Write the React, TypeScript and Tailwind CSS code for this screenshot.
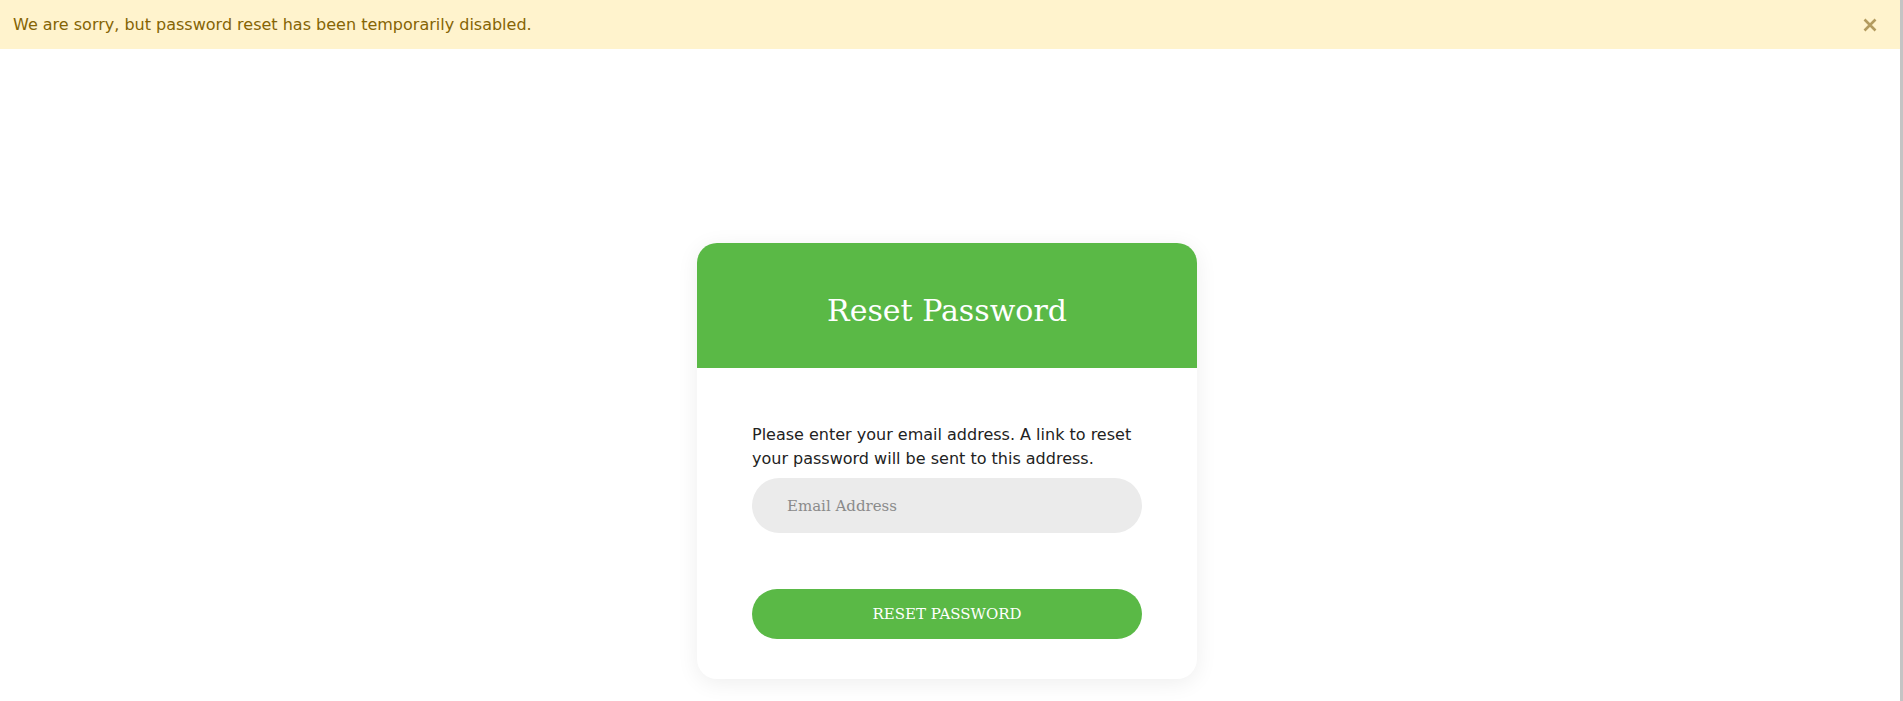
import React from "react";

export default function App() {
  return (
    <div className="flex min-h-[701px] w-full bg-white">
      <div className="flex-1 flex flex-col">
        <div className="h-[49px] bg-[#fff3cd] flex items-center justify-between pl-[13px] pr-[23px]" style={{ fontFamily: '"DejaVu Sans", sans-serif' }}>
          <span className="text-[16px] text-[#856404]">We are sorry, but password reset has been temporarily disabled.</span>
          <button className="w-[14px] h-[14px] flex items-center justify-center text-[#b39b5f]" aria-label="Close">
            <svg width="14" height="14" viewBox="0 0 14 14" fill="none" stroke="currentColor" strokeWidth="2.6" strokeLinecap="butt">
              <path d="M1.5 1.5 L12.5 12.5 M12.5 1.5 L1.5 12.5" />
            </svg>
          </button>
        </div>
        <div className="flex justify-center pt-[194px] pr-[6px]">
          <div className="w-[500px] rounded-[20px] bg-white shadow-[0_4px_22px_rgba(0,0,0,0.07)] overflow-hidden">
            <div className="h-[125px] bg-[#5ab946] pt-[50px]">
              <h1 className="text-center text-[30px] leading-[35px] text-white" style={{ fontFamily: '"DejaVu Serif", serif' }}>Reset Password</h1>
            </div>
            <div className="px-[55px] pt-[55px] pb-[40px]">
              <p className="text-[16px] leading-[24px] text-[#222]" style={{ fontFamily: '"DejaVu Sans", sans-serif' }}>
                Please enter your email address. A link to reset your password will be sent to this address.
              </p>
              <input
                type="email"
                placeholder="Email Address"
                className="mt-[7px] block w-full h-[55px] rounded-full bg-[#ebebeb] pl-[35px] pr-[20px] text-[15px] text-[#333] placeholder:text-[#8a8a8a] outline-none"
                style={{ fontFamily: '"DejaVu Serif", serif' }}
              />
              <button
                className="mt-[56px] block w-full h-[50px] rounded-full bg-[#5ab946] text-white text-[15px]"
                style={{ fontFamily: '"DejaVu Serif", serif' }}
              >
                RESET PASSWORD
              </button>
            </div>
          </div>
        </div>
      </div>
      <div className="w-[3px] bg-[#c4c4c4]" />
    </div>
  );
}
